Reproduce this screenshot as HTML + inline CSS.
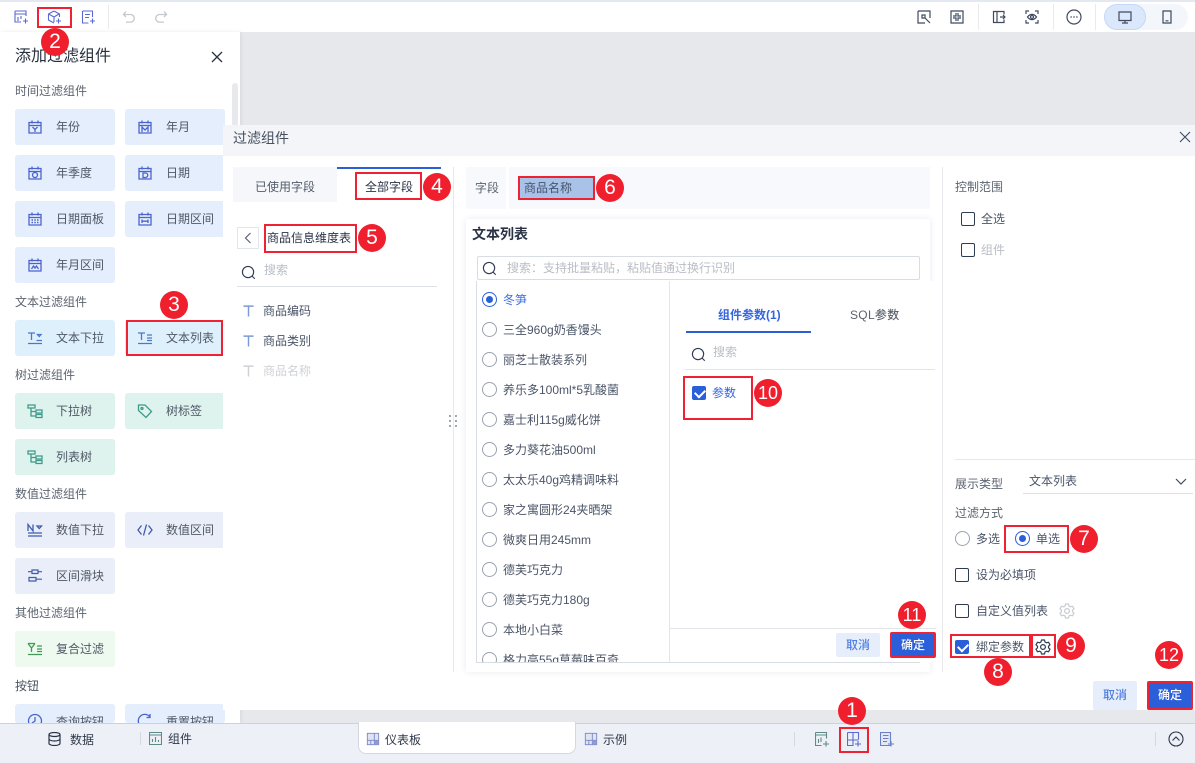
<!DOCTYPE html>
<html lang="zh"><head><meta charset="utf-8"><title>过滤组件</title>
<style>
*{box-sizing:border-box}
html,body{margin:0;padding:0}
body{width:1195px;height:763px;position:relative;overflow:hidden;background:#e6e8ec;font-family:"Liberation Sans","Noto Sans CJK SC",sans-serif;color:#46526a}
div,span,svg{position:absolute}
.t{white-space:nowrap;line-height:20px;font-size:12px;color:#4b5568}
.g{color:#b9bdc5}
.l{color:#5c6470}
.b{width:100px;height:36px;border-radius:3px}
.b span{left:41px;top:8px;white-space:nowrap;line-height:20px;font-size:12px;color:#4f5866}
.b svg{left:12px;top:10px;width:16px;height:16px;fill:none;stroke:#4a63cf;stroke-width:1.3}
.r{border:2px solid #ee2233}
.c{width:28px;height:28px;border-radius:50%;background:#f01f2d;color:#fff;text-align:center;line-height:28px;font-size:21px;z-index:9;font-family:"Liberation Sans",sans-serif}
.c.d{font-size:18px}
.rd{width:15px;height:15px;border-radius:50%;border:1px solid #9aa2b0;background:#fff}
.rd.on{border-color:#2b5fd9}
.rd.on:after{content:"";position:absolute;left:3px;top:3px;width:7px;height:7px;border-radius:50%;background:#2b5fd9}
.cb{width:14px;height:14px;border:1.3px solid #2f3b52;border-radius:2px;background:#fff}
.cb.on{background:#2b5fd9;border-color:#2b5fd9}
.cb.on:after{content:"";position:absolute;left:2px;top:2px;width:8px;height:5px;border-left:2px solid #fff;border-bottom:2px solid #fff;transform:rotate(-45deg)}
.i{fill:none;stroke:#5a6ad0;stroke-width:1.1}
.k{fill:none;stroke:#3f4a60;stroke-width:1.2}
.btn{text-align:center;font-size:12px;border-radius:2px;font-weight:500}
.can{background:#e6eefb;color:#4f7de0}
.ok{background:#2b5fd9;color:#fff}
</style></head><body>
<svg width="0" height="0" style="left:0;top:0"><defs>
<symbol id="cal" viewBox="0 0 16 16"><path d="M2 3.500h12v10.500H2zM2 6.500h12M5 1.500v3M11 1.500v3"/></symbol>
<symbol id="srch" viewBox="0 0 16 16"><circle cx="7.500" cy="7.500" r="6" fill="none" stroke="#2f3b52" stroke-width="1.200"/><path d="M11.700 11.700l3 3" stroke="#2f3b52" stroke-width="1.200"/></symbol>
<symbol id="gear" viewBox="0 0 16 16"><path d="M6.500 1h3l.5 2 1.500.8 2-.6 1.500 2.600-1.500 1.400v1.600l1.500 1.400-1.500 2.600-2-.6-1.500.8-.5 2h-3l-.5-2-1.500-.8-2 .6L1 10.200l1.500-1.400V7.200L1 5.800l1.500-2.600 2 .6L6 3z" fill="none" stroke-width="1.200" stroke-linejoin="round"/><circle cx="8" cy="8" r="2.400" fill="none" stroke-width="1.200"/></symbol>
<symbol id="tab" viewBox="0 0 16 16"><path d="M1.500 1.500h13v13h-13z" fill="#dfe3f3" stroke="#7a86c4"/><path d="M1.500 9.500h13M9.500 1.500v13M5.500 9.500v5" stroke="#7a86c4" fill="none"/><path d="M9.500 9.500h5v5h-5z" fill="#8f9ad0"/></symbol>
<symbol id="tt" viewBox="0 0 12 13"><path d="M.5 1.200h11M6 1.200V12.500" fill="none" stroke-width="1.600"/></symbol>
</defs></svg>

<!-- top toolbar -->
<div style="left:0;top:0;width:1195px;height:2px;background:#e4e8f0"></div>
<div style="left:0;top:2px;width:1195px;height:30px;background:#fff"></div>
<svg class="i" style="left:14px;top:10px" width="14" height="14" viewBox="0 0 14 14"><path d="M1 1h11v5M1 1v11h6M1 4h11M4 7v4M7 6v3M9 11h5M11.500 8.500v5" /></svg>
<svg class="i" style="left:47px;top:10px" width="14" height="14" viewBox="0 0 14 14"><path d="M7 1l5.500 3v3M7 1L1.500 4v6L7 13M1.500 4L7 7l5-3M7 7v5M9 11h5M11.500 8.500v5"/></svg>
<svg class="i" style="left:81px;top:10px" width="14" height="14" viewBox="0 0 14 14"><path d="M1.500 1h10v6M1.500 1v12h6M4 4.500h5M4 7.500h4M9 11h5M11.500 8.500v5"/></svg>
<div style="left:108px;top:5px;width:1px;height:24px;background:#e8eaee"></div>
<svg style="left:122px;top:10px;fill:none;stroke:#c4c8cf;stroke-width:1.300" width="14" height="14" viewBox="0 0 14 14"><path d="M4 1.500L1.500 4.500 4 7M1.500 4.500h7a3.800 3.800 0 010 7.600H4"/></svg>
<svg style="left:154px;top:10px;fill:none;stroke:#c4c8cf;stroke-width:1.300" width="14" height="14" viewBox="0 0 14 14"><path d="M10 1.500l2.500 3L10 7M12.500 4.500h-7a3.800 3.800 0 000 7.600H10"/></svg>
<div class="r" style="left:37px;top:7px;width:35px;height:21px"></div>

<svg class="k" style="left:917px;top:10px" width="14" height="14" viewBox="0 0 14 14"><path d="M1 1h12v7M1 1v12h7M5 5h3v3H5zM8 8l5 5"/></svg>
<svg class="k" style="left:950px;top:10px" width="14" height="14" viewBox="0 0 14 14"><path d="M1 1h12v12H1zM6 3v3H3M6 11V8H3M8 3v3h3M8 11V8h3" /></svg>
<div style="left:978px;top:4px;width:1px;height:26px;background:#e8eaee"></div>
<svg class="k" style="left:992px;top:10px" width="14" height="14" viewBox="0 0 14 14"><path d="M5 1.500H1.500v11H5zM5 1.500h7v3M5 12.500h7v-3M8 7h5M11 5l2 2-2 2"/></svg>
<svg class="k" style="left:1025px;top:10px" width="14" height="14" viewBox="0 0 14 14"><path d="M1 4V1h3M10 1h3v3M1 10v3h3M10 13h3v-3M2.500 7C5 3.500 9 3.500 11.500 7 9 10.500 5 10.500 2.500 7z"/><circle cx="7" cy="7" r="1.500"/></svg>
<div style="left:1053px;top:4px;width:1px;height:26px;background:#e8eaee"></div>
<svg class="k" style="left:1066px;top:9px" width="16" height="16" viewBox="0 0 16 16"><circle cx="8" cy="8" r="7"/><path d="M4.500 8h1.200M7.400 8h1.200M10.300 8h1.200" stroke-width="1.500"/></svg>
<div style="left:1095px;top:4px;width:1px;height:26px;background:#e8eaee"></div>
<div style="left:1104px;top:4px;width:84px;height:26px;border-radius:13px;background:#f3f6fb"></div>
<div style="left:1104px;top:4px;width:42px;height:26px;border-radius:13px;background:#dbe8fb;border:1px solid #c4d8f6"></div>
<svg class="k" style="left:1118px;top:10px" width="14" height="14" viewBox="0 0 14 14"><path d="M1 2h12v8.500H1zM7 10.500V13M4 13h6"/></svg>
<svg class="k" style="left:1160px;top:10px" width="14" height="14" viewBox="0 0 14 14"><path d="M3 1h8v12H3zM5.500 10.800h3"/></svg>

<!-- left panel -->
<div style="left:0;top:32px;width:240px;height:691px;background:#fff;box-shadow:1px 0 4px rgba(0,0,0,.08)"></div>
<div style="left:232px;top:83px;width:6px;height:44px;background:#e8e9ec;border-radius:3px"></div>
<span class="t" style="left:15px;top:47px;font-size:16px;color:#262f3f">添加过滤组件</span>
<svg style="left:211px;top:51px;fill:none;stroke:#2a3346;stroke-width:1.300" width="12" height="12" viewBox="0 0 12 12"><path d="M1 1l10 10M11 1L1 11"/></svg>

<span class="t l" style="left:15px;top:81px">时间过滤组件</span>
<div class="b" style="left:15px;top:109px;background:#e4eefc"><svg viewBox="0 0 16 16"><use href="#cal"/><path d="M5.500 8L8 10.500 10.500 8M8 10.500V13"/></svg><span>年份</span></div>
<div class="b" style="left:125px;top:109px;background:#e4eefc;width:100px"><svg viewBox="0 0 16 16"><use href="#cal"/><path d="M5 13V8l3 3 3-3v5"/></svg><span>年月</span></div>
<div class="b" style="left:15px;top:155px;background:#e4eefc"><svg viewBox="0 0 16 16"><use href="#cal"/><circle cx="8" cy="10" r="2.500"/></svg><span>年季度</span></div>
<div class="b" style="left:125px;top:155px;background:#e4eefc"><svg viewBox="0 0 16 16"><use href="#cal"/><path d="M6 8h2.500a2 2 0 010 4.500H6z"/></svg><span>日期</span></div>
<div class="b" style="left:15px;top:201px;background:#e4eefc"><svg viewBox="0 0 16 16"><use href="#cal"/><path d="M4.500 9h1.500M7.300 9h1.500M10 9h1.500M4.500 11.500h1.500M7.300 11.500h1.500M10 11.500h1.500" stroke-width="1.500"/></svg><span>日期面板</span></div>
<div class="b" style="left:125px;top:201px;background:#e4eefc"><svg viewBox="0 0 16 16"><use href="#cal"/><path d="M5 8.500v3.500M11 8.500v3.500M5 10.200h6"/></svg><span>日期区间</span></div>
<div class="b" style="left:15px;top:247px;background:#e4eefc"><svg viewBox="0 0 16 16"><use href="#cal"/><path d="M4.500 12l2-3 1.500 2 1.500-2 2 3"/></svg><span>年月区间</span></div>

<span class="t l" style="left:15px;top:292px">文本过滤组件</span>
<div class="b" style="left:15px;top:320px;background:#dff0fd"><svg viewBox="0 0 16 16" style="stroke:#4a79c9"><path d="M1 3h7M4.500 3v7M1 13.500h14M9.500 10.500h5.500M10.500 4.500h3.500l-1.750 2z"/></svg><span>文本下拉</span></div>
<div class="b" style="left:125px;top:320px;background:#dff0fd"><svg viewBox="0 0 16 16" style="stroke:#4a79c9"><path d="M1 3h7M4.500 3v7M1 13.500h14M10 5h5M10 8h5M10 10.500h5"/></svg><span>文本列表</span></div>
<div class="r" style="left:126px;top:320px;width:97px;height:36px"></div>

<span class="t l" style="left:15px;top:365px">树过滤组件</span>
<div class="b" style="left:15px;top:393px;background:#def2ee"><svg viewBox="0 0 16 16" style="stroke:#3f9a8a"><path d="M1 2h7v3H1zM9 7h6v3H9zM9 11.500h6v3H9zM4 5v8h5M4 8.500h5"/></svg><span>下拉树</span></div>
<div class="b" style="left:125px;top:393px;background:#def2ee"><svg viewBox="0 0 16 16" style="stroke:#3f9a8a"><path d="M1.500 2h6.500l6.500 6.500L9 14.500 1.500 7.500z"/><circle cx="5" cy="5.500" r="1"/></svg><span>树标签</span></div>
<div class="b" style="left:15px;top:439px;background:#def2ee"><svg viewBox="0 0 16 16" style="stroke:#3f9a8a"><path d="M1 2h7v3H1zM9 7h6v3H9zM9 11.500h6v3H9zM4 5v8h5M4 8.500h5"/></svg><span>列表树</span></div>

<span class="t l" style="left:15px;top:484px">数值过滤组件</span>
<div class="b" style="left:15px;top:512px;background:#e9eef8"><svg viewBox="0 0 16 16" style="stroke:#3f5ab0"><path d="M1 9V2.500L6 9V2.500M1 11h14M1 14h14M10 4h4.500l-2.250 2.500z"/></svg><span>数值下拉</span></div>
<div class="b" style="left:125px;top:512px;background:#e9eef8"><svg viewBox="0 0 16 16" style="stroke:#3f5ab0"><path d="M4.500 3.500L1 8l3.500 4.500M11.500 3.500L15 8l-3.500 4.500M9.500 2.500l-3 11"/></svg><span>数值区间</span></div>
<div class="b" style="left:15px;top:558px;background:#e9eef8"><svg viewBox="0 0 16 16" style="stroke:#3f5ab0"><path d="M5 2h6v3.500H5zM2 9.500h7V13H2zM1 3.700h4M11 3.700h4M9 11.200h6" stroke-width="1.200"/></svg><span>区间滑块</span></div>

<span class="t l" style="left:15px;top:603px">其他过滤组件</span>
<div class="b" style="left:15px;top:631px;background:#eefaf0"><svg viewBox="0 0 16 16" style="stroke:#3f9a55"><path d="M1 2.500h7M1 2.500L4.500 7 8 2.500M4.500 7v4M1 13.500h14M10 5h5M10 8h5M10 10.500h5"/></svg><span>复合过滤</span></div>

<span class="t" style="left:15px;top:676px;color:#4b5362">按钮</span>
<div class="b" style="left:15px;top:704px;background:#e4eefc;height:19px;overflow:hidden"><svg viewBox="0 0 16 16" style="stroke:#4a63cf;top:9px"><circle cx="8" cy="8" r="6.500"/><path d="M8 4v4l-3 2"/></svg><span>查询按钮</span></div>
<div class="b" style="left:125px;top:704px;background:#e4eefc;height:19px;overflow:hidden"><svg viewBox="0 0 16 16" style="stroke:#4a63cf;top:9px"><path d="M13 4a6.500 6.500 0 10.500 7M13 1v3.500H9.500"/></svg><span>重置按钮</span></div>
<div class="c" style="left:41px;top:28px">2</div>
<div class="c" style="left:160px;top:291px">3</div>

<!-- modal -->
<div style="left:223px;top:125px;width:972px;height:31px;background:#f3f5f8"></div>
<div style="left:223px;top:156px;width:972px;height:554px;background:#fff"></div>
<span class="t" style="left:233px;top:128px;font-size:14px;color:#46505f">过滤组件</span>
<svg style="left:1179px;top:131px;fill:none;stroke:#3f4a60;stroke-width:1.100" width="12" height="12" viewBox="0 0 12 12"><path d="M1 1l10 10M11 1L1 11"/></svg>

<div style="left:233px;top:167px;width:104px;height:35px;background:#f5f7fb"></div>
<span class="t" style="left:255px;top:177px;color:#535c6b">已使用字段</span>
<div style="left:337px;top:167px;width:104px;height:2px;background:#2b5fd9"></div>
<span class="t" style="left:365px;top:177px;color:#2a3346">全部字段</span>
<div class="r" style="left:355px;top:172px;width:67px;height:28px"></div>
<div class="c" style="left:423px;top:173px">4</div>
<div style="left:453px;top:167px;width:1px;height:505px;background:#e6e8ec"></div>

<div style="left:237px;top:227px;width:22px;height:22px;border:1px solid #e2e5ea"></div>
<svg style="left:244px;top:232px;fill:none;stroke:#586274;stroke-width:1.200" width="8" height="12" viewBox="0 0 8 12"><path d="M6.500 1L1.500 6l5 5"/></svg>
<span class="t" style="left:267px;top:228px;color:#2a3346">商品信息维度表</span>
<div class="r" style="left:264px;top:224px;width:93px;height:29px"></div>
<div class="c" style="left:358px;top:224px">5</div>
<svg style="left:241px;top:265px" width="15" height="15"><use href="#srch"/></svg>
<span class="t g" style="left:264px;top:260px">搜索</span>
<div style="left:237px;top:286px;width:200px;height:1px;background:#dfe2e7"></div>
<svg style="left:243px;top:305px;stroke:#7b9ad6" width="11" height="12"><use href="#tt"/></svg><span class="t" style="left:263px;top:301px">商品编码</span>
<svg style="left:243px;top:335px;stroke:#7b9ad6" width="11" height="12"><use href="#tt"/></svg><span class="t" style="left:263px;top:331px">商品类别</span>
<svg style="left:243px;top:365px;stroke:#ced1d6" width="11" height="12"><use href="#tt"/></svg><span class="t" style="left:263px;top:361px;color:#ced1d6">商品名称</span>
<svg style="left:448px;top:414px;fill:#5e6878" width="10" height="14" viewBox="0 0 10 14"><circle cx="2" cy="2" r=".9"/><circle cx="2" cy="7" r=".9"/><circle cx="2" cy="12" r=".9"/><circle cx="8" cy="2" r=".9"/><circle cx="8" cy="7" r=".9"/><circle cx="8" cy="12" r=".9"/></svg>

<div style="left:466px;top:167px;width:464px;height:42px;background:#f7f9fd"></div>
<div style="left:506px;top:167px;width:3px;height:42px;background:#fff"></div>
<span class="t" style="left:475px;top:178px;color:#5c6470">字段</span>
<div class="r" style="left:518px;top:176px;width:77px;height:24px;background:#a9c2e8"></div>
<span class="t" style="left:524px;top:178px;color:#47536a">商品名称</span>
<div class="c" style="left:596px;top:174px">6</div>

<!-- text list card -->
<div style="left:466px;top:219px;width:464px;height:453px;background:#fff;box-shadow:0 0 6px rgba(60,80,120,.12)"></div>
<span class="t" style="left:472px;top:224px;font-size:14px;font-weight:700;color:#2a3346">文本列表</span>
<div style="left:477px;top:256px;width:443px;height:24px;border:1px solid #d8dce3;border-radius:2px"></div>
<svg style="left:482px;top:261px" width="15" height="15"><use href="#srch"/></svg>
<span class="t g" style="left:507px;top:258px">搜索：支持批量粘贴，粘贴值通过换行识别</span>
<div style="left:476px;top:281px;width:1px;height:382px;background:#d8dce3"></div>
<div style="left:476px;top:662px;width:444px;height:1px;background:#d8dce3"></div>
<div style="left:477px;top:281px;width:192px;height:381px;overflow:hidden">
<div class="rd on" style="left:5px;top:11px"></div><span class="t" style="left:26px;top:9px;color:#3e6be0">冬笋</span>
<div class="rd" style="left:5px;top:41px"></div><span class="t" style="left:26px;top:39px">三全960g奶香馒头</span>
<div class="rd" style="left:5px;top:71px"></div><span class="t" style="left:26px;top:69px">丽芝士散装系列</span>
<div class="rd" style="left:5px;top:101px"></div><span class="t" style="left:26px;top:99px">养乐多100ml*5乳酸菌</span>
<div class="rd" style="left:5px;top:131px"></div><span class="t" style="left:26px;top:129px">嘉士利115g威化饼</span>
<div class="rd" style="left:5px;top:161px"></div><span class="t" style="left:26px;top:159px">多力葵花油500ml</span>
<div class="rd" style="left:5px;top:191px"></div><span class="t" style="left:26px;top:189px">太太乐40g鸡精调味料</span>
<div class="rd" style="left:5px;top:221px"></div><span class="t" style="left:26px;top:219px">家之寓圆形24夹晒架</span>
<div class="rd" style="left:5px;top:251px"></div><span class="t" style="left:26px;top:249px">微爽日用245mm</span>
<div class="rd" style="left:5px;top:281px"></div><span class="t" style="left:26px;top:279px">德芙巧克力</span>
<div class="rd" style="left:5px;top:311px"></div><span class="t" style="left:26px;top:309px">德芙巧克力180g</span>
<div class="rd" style="left:5px;top:341px"></div><span class="t" style="left:26px;top:339px">本地小白菜</span>
<div class="rd" style="left:5px;top:371px"></div><span class="t" style="left:26px;top:369px">格力高55g草莓味百奇</span>
</div>

<!-- param panel -->
<div style="left:669px;top:281px;width:267px;height:381px;background:#fff;border-left:1px solid #e2e5ea"></div>
<span class="t" style="left:718px;top:305px;color:#3565dc;font-weight:700;font-size:12px">组件参数(1)</span>
<div style="left:686px;top:331px;width:125px;height:2px;background:#2b5fd9"></div>
<span class="t" style="left:850px;top:305px;color:#5c6470;font-weight:500;font-size:12px;letter-spacing:.3px">SQL参数</span>
<svg style="left:691px;top:347px" width="15" height="15"><use href="#srch"/></svg>
<span class="t g" style="left:713px;top:342px">搜索</span>
<div style="left:685px;top:369px;width:250px;height:1px;background:#e2e5ea"></div>
<div class="r" style="left:683px;top:376px;width:70px;height:44px"></div>
<div class="cb on" style="left:692px;top:386px"></div>
<span class="t" style="left:712px;top:383px;color:#3565dc">参数</span>
<div class="c d" style="left:754px;top:379px">10</div>
<div style="left:669px;top:628px;width:267px;height:1px;background:#e2e5ea"></div>
<div class="btn can" style="left:836px;top:633px;width:44px;height:24px;line-height:24px">取消</div>
<div class="btn ok r" style="left:890px;top:632px;width:46px;height:26px;line-height:22px">确定</div>
<div class="c d" style="left:898px;top:601px">11</div>

<!-- right column -->
<div style="left:942px;top:167px;width:1px;height:505px;background:#e6e8ec"></div>
<span class="t" style="left:955px;top:177px;color:#5c6470">控制范围</span>
<div class="cb" style="left:961px;top:212px"></div><span class="t" style="left:981px;top:209px">全选</span>
<div class="cb" style="left:961px;top:243px"></div><span class="t g" style="left:981px;top:240px">组件</span>
<div style="left:955px;top:459px;width:240px;height:1px;background:#e6e8ec"></div>
<span class="t" style="left:955px;top:474px;color:#5c6470">展示类型</span>
<span class="t" style="left:1029px;top:471px">文本列表</span>
<div style="left:1023px;top:493px;width:170px;height:1px;background:#dfe2e7"></div>
<svg style="left:1175px;top:478px;fill:none;stroke:#3f4a60;stroke-width:1.200" width="12" height="7" viewBox="0 0 12 7"><path d="M1 1l5 5 5-5"/></svg>
<span class="t" style="left:955px;top:503px;color:#5c6470">过滤方式</span>
<div class="rd" style="left:955px;top:531px"></div><span class="t" style="left:976px;top:529px">多选</span>
<div class="r" style="left:1004px;top:525px;width:65px;height:28px"></div>
<div class="rd on" style="left:1015px;top:531px"></div><span class="t" style="left:1036px;top:529px">单选</span>
<div class="c" style="left:1070px;top:525px">7</div>
<div class="cb" style="left:955px;top:568px"></div><span class="t" style="left:976px;top:565px">设为必填项</span>
<div class="cb" style="left:955px;top:604px"></div><span class="t" style="left:976px;top:601px">自定义值列表</span>
<svg style="left:1059px;top:603px;stroke:#c8ccd3" width="16" height="16" viewBox="0 0 16 16"><use href="#gear"/></svg>
<div class="r" style="left:950px;top:634px;width:81px;height:24px"></div>
<div class="r" style="left:1031px;top:634px;width:25px;height:24px"></div>
<div class="cb on" style="left:955px;top:640px"></div><span class="t" style="left:976px;top:637px">绑定参数</span>
<svg style="left:1035px;top:639px;stroke:#2f3b52" width="16" height="16" viewBox="0 0 16 16"><use href="#gear"/></svg>
<div class="c" style="left:1057px;top:632px">9</div>
<div class="c" style="left:984px;top:658px">8</div>
<div class="c d" style="left:1155px;top:641px">12</div>
<div class="btn can" style="left:1093px;top:681px;width:44px;height:29px;line-height:29px">取消</div>
<div class="btn ok r" style="left:1147px;top:681px;width:46px;height:29px;line-height:25px">确定</div>

<!-- bottom bar -->
<div style="left:0;top:723px;width:1195px;height:40px;background:#edf0f6;border-top:1px solid #cdd2da"></div>
<svg style="left:48px;top:732px;fill:none;stroke:#2a3346;stroke-width:1.200" width="13" height="14" viewBox="0 0 13 14"><ellipse cx="6.500" cy="2.500" rx="5.500" ry="2"/><path d="M1 2.500v9c0 1 2.500 2 5.500 2s5.500-1 5.500-2v-9M1 7c0 1 2.500 2 5.500 2S12 8 12 7"/></svg>
<span class="t" style="left:70px;top:730px;color:#2f3848">数据</span>
<div style="left:140px;top:732px;width:1px;height:13px;background:#d4d8df"></div>
<svg style="left:149px;top:732px;fill:none;stroke:#5f8a8a;stroke-width:1.100" width="13" height="13" viewBox="0 0 13 13"><path d="M.5.500h12v12H.5zM.5 3h12M3.500 10V7M6.500 10V5M9.500 10V8"/></svg>
<span class="t" style="left:168px;top:729px;color:#2f3848">组件</span>
<div style="left:358px;top:722px;width:218px;height:32px;background:#fff;border:1px solid #d4d8df;border-top:none;border-radius:0 0 8px 8px"></div>
<svg style="left:366px;top:732px" width="14" height="14"><use href="#tab"/></svg>
<span class="t" style="left:385px;top:730px;color:#2f3848">仪表板</span>
<svg style="left:584px;top:732px" width="14" height="14"><use href="#tab"/></svg>
<span class="t" style="left:603px;top:730px;color:#2f3848">示例</span>
<div style="left:794px;top:732px;width:1px;height:14px;background:#d4d8df"></div>
<svg style="left:815px;top:732px;fill:none;stroke:#5f8a8a;stroke-width:1.100" width="15" height="15" viewBox="0 0 15 15"><path d="M.5.500h11v6M.5.500v13h6M.5 3h11M3.500 11V7M6 10V5.500M8 12h6M11 9v5.500"/></svg>
<div class="r" style="left:839px;top:727px;width:30px;height:26px"></div>
<svg style="left:847px;top:732px;fill:none;stroke:#5a6ad0;stroke-width:1.100" width="15" height="15" viewBox="0 0 15 15"><path d="M.5.500h11v7M.5.500v13h6M.5 8h11M6 .5v13M8 12h6M11 9v5.500"/></svg>
<svg style="left:880px;top:732px;fill:#e3e7f5;stroke:#6a80c8;stroke-width:1.100" width="15" height="15" viewBox="0 0 15 15"><path d="M.5.500h10v13H.5zM3 3.500h5.500M3 6.500h5.500M3 9.500h4M8 12h6M11 9v5.500"/></svg>
<div class="c" style="left:838px;top:697px">1</div>
<div style="left:1155px;top:732px;width:1px;height:14px;background:#d4d8df"></div>
<svg style="left:1168px;top:731px;fill:none;stroke:#2a3346;stroke-width:1.100" width="16" height="16" viewBox="0 0 16 16"><circle cx="8" cy="8" r="7"/><path d="M4.500 9.500L8 6l3.500 3.500"/></svg>
</body></html>
